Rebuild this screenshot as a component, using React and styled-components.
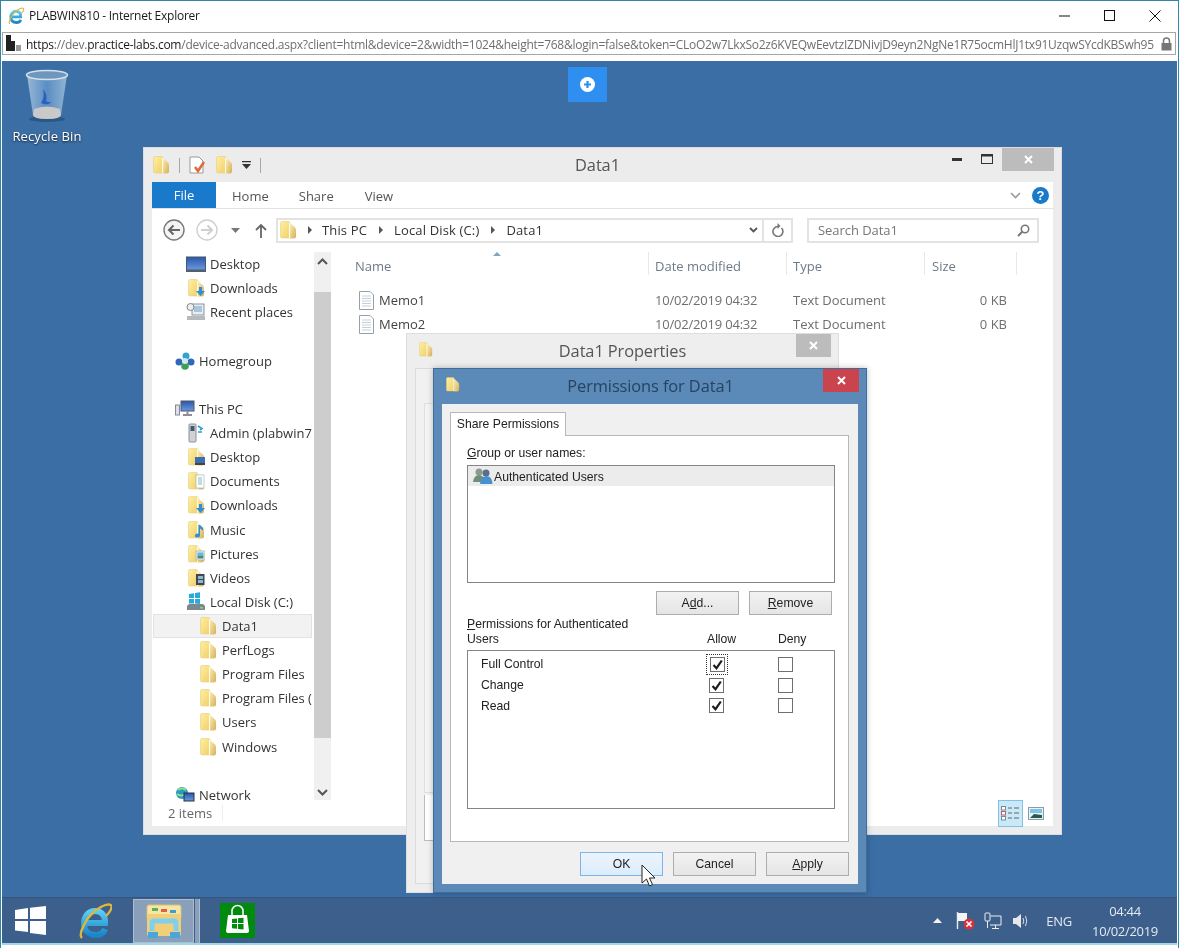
import React from "react";
import styled, { createGlobalStyle } from "styled-components";

const Global = createGlobalStyle`
  html, body { margin: 0; padding: 0; background: #fff; overflow: hidden; }
  * { box-sizing: border-box; }
`;

const ui = `"Open Sans", "Noto Sans", sans-serif`;
const dlg = `"Liberation Sans", Arial, sans-serif`;

const Frame = styled.div`
  width: 1179px; height: 948px; display: flex; flex-direction: column;
  background: #fff; border-top: 1px solid #2f86a6; border-left: 1px solid #2f86a6;
  border-right: 1px solid #2f86a6; padding: 0 1px 3px; font-family: ${ui};
  filter: blur(0.4px); overflow: hidden;
`;
const BrowserTitle = styled.div`
  height: 31px; flex: none; display: flex; align-items: center; padding: 0 0 2px 6px;
  font-size: 12px; color: #1a1a1a; letter-spacing: -0.25px;
`;
const BrowserTitleText = styled.span`flex: 1; padding-left: 5px;`;
const WindowControl = styled.div`
  width: 45px; height: 29px; display: flex; align-items: center; justify-content: center;
`;
const UrlBar = styled.div`
  height: 23px; flex: none; margin-right: 1px; border: 1px solid #a6a6a6; display: flex; align-items: center;
  padding: 0 3px 0 3px; gap: 4px; overflow: hidden;
`;
const UrlText = styled.div`
  flex: 1; white-space: nowrap; overflow: hidden; font-size: 12px; color: #6f6f6f; letter-spacing: -0.25px; padding-top: 1px;
`;
const UrlStrong = styled.span`color: #1a1a1a;`;
const Desktop = styled.div`
  margin-top: 6px; height: 836px; flex: none; position: relative; background: #3b6ea5;
`;
const RevealButton = styled.div`
  position: absolute; left: 566px; top: 6px; width: 39px; height: 35px; background: #2e8ff0;
  display: flex; align-items: center; justify-content: center;
`;
const DesktopIcon = styled.div`
  position: absolute; left: 4px; top: 8px; width: 82px; display: flex; flex-direction: column; align-items: center; gap: 4px;
  color: #fff; font-size: 13px; text-shadow: 0 1px 2px rgba(0,0,0,.75); letter-spacing: 0.1px;
`;
const Explorer = styled.div`
  position: absolute; left: 141px; top: 86px; width: 919px; height: 688px; background: #ececec;
  border: 1px solid #dcdcdc; display: flex; flex-direction: column; padding: 0 8px 8px;
`;
const ExplorerTitleBar = styled.div`
  height: 34px; flex: none; display: grid; grid-template-columns: 1fr auto 1fr; align-items: center;
`;
const Quick = styled.div`display: flex; align-items: center; gap: 9px; padding-left: 1px;`;
const QuickSep = styled.div`width: 1px; height: 15px; background: #a8a8a8;`;
const WindowTitle = styled.div`
  text-align: center; font-size: 16.4px; color: ${p => p.$color || "#555"}; letter-spacing: -0.1px;
`;
const ExplorerCaption = styled(WindowTitle)`padding: 0 10px 2px 0;`;
const ExplorerCaps = styled.div`
  display: flex; justify-content: flex-end; align-items: flex-start; height: 34px; margin-right: -1px;
`;
const CapIcon = styled.div`
  width: 30px; height: 22px; display: flex; align-items: center; justify-content: center;
`;
const CloseCap = styled.div`
  width: ${p => p.$w || 52}px; height: 23px; background: ${p => p.$bg || "#bcbcbc"}; justify-self: end;
  display: flex; align-items: center; justify-content: center; flex: none;
`;
const Client = styled.div`flex: 1; background: #fff; display: flex; flex-direction: column; min-height: 0;`;
const Ribbon = styled.div`
  height: 27px; flex: none; border-bottom: 1px solid #e2e2e2; display: flex; align-items: stretch;
  font-size: 13px; color: #555;
`;
const FileTab = styled.div`
  width: 64px; height: 26px; background: #1979ca; color: #fff; display: flex; align-items: center; justify-content: center;
`;
const RibbonTab = styled.div`display: flex; align-items: center; padding-top: 2px; margin-left: ${p => p.$ml}px;`;
const RibbonEnd = styled.div`margin-left: auto; display: flex; align-items: center; gap: 11px; padding-right: 4px;`;
const HelpDot = styled.div`
  width: 17px; height: 17px; border-radius: 50%; background: #1979ca; color: #fff; font: bold 13px ${dlg};
  display: flex; align-items: center; justify-content: center;
`;
const AddressRow = styled.div`
  height: 44px; flex: none; display: flex; align-items: center; padding: 0 13px 0 11px; margin-top: -1px;
`;
const NavButtons = styled.div`display: flex; align-items: center; width: 113px; flex: none;`;
const AddressBox = styled.div`
  width: 517px; height: 25px; border: 2px solid #e3e3e3; display: flex; align-items: center; font-size: 13px; color: #333;
  padding-left: 2px; flex: none;
`;
const Crumb = styled.span`margin-left: ${p => p.$ml || 0}px; white-space: nowrap; letter-spacing: 0.15px;`;
const CrumbArrow = styled.span`
  margin-left: ${p => p.$ml || 9}px; width: 0; height: 0; border-left: 4px solid #555; border-top: 4px solid transparent; border-bottom: 4px solid transparent;
`;
const AddressEnd = styled.div`
  margin-left: auto; display: flex; align-items: center; height: 100%;
`;
const AddressCell = styled.div`
  width: ${p => p.$w}px; height: 100%; display: flex; align-items: center; justify-content: center;
  border-left: ${p => p.$line ? "2px solid #e3e3e3" : "none"};
`;
const SearchBox = styled.div`
  margin-left: 14px; width: 232px; height: 25px; border: 2px solid #e3e3e3; display: flex; align-items: center; justify-content: space-between;
  padding: 0 7px 0 9px; font-size: 13px; color: #777; flex: none; letter-spacing: -0.05px;
`;
const Body = styled.div`flex: 1; display: flex; min-height: 0;`;
const NavPane = styled.div`
  width: 161px; flex: none; font-size: 13px; color: #333; padding-left: 1px;
`;
const NavRow = styled.div`
  height: 24.12px; display: flex; align-items: center; white-space: nowrap; width: 159px; overflow: hidden;
  padding-left: ${p => p.$level === 0 ? 22 : p.$level === 1 ? 33 : 45}px; gap: 4px;
  margin-top: ${p => p.$gap || 0}px;
  background: ${p => p.$sel ? "#f2f2f2" : "none"};
  outline: ${p => p.$sel ? "1px solid #e2e2e2" : "none"}; outline-offset: -1px;
`;
const IconSlot = styled.span`
  width: ${p => p.$w || 20}px; height: 20px; flex: none; display: flex; align-items: center; justify-content: center; margin-right: ${p => p.$mr || 0}px;
`;
const ScrollTrack = styled.div`
  width: 17px; flex: none; background: #f0f0f0; display: flex; flex-direction: column; margin-left: 1px;
`;
const ScrollEnd = styled.div`
  height: ${p => p.$h}px; flex: none; display: flex; justify-content: center; align-items: ${p => p.$down ? "flex-end" : "flex-start"};
  padding: ${p => p.$down ? "0 0 4px" : "6px 0 0"};
`;
const ScrollThumb = styled.div`flex: 1; background: #cdcdcd;`;
const ListPane = styled.div`flex: 1; display: flex; flex-direction: column; padding-left: 24px;`;
const HeaderRow = styled.div`
  display: grid; grid-template-columns: 294px 138px 138px 92px; height: 23px; font-size: 13px; color: #6d7a88; position: relative;
`;
const HeaderCell = styled.div`
  border-right: 1px solid #e8e8e8; padding-left: ${p => p.$pl ?? 6}px; display: flex; align-items: center; padding-top: 4px;
`;
const SortMark = styled.div`
  position: absolute; left: 138px; top: 0; width: 0; height: 0; border-left: 4px solid transparent; border-right: 4px solid transparent; border-bottom: 4px solid #7ca6c4;
`;
const FileList = styled.div`margin-top: 13px;`;
const FileRow = styled.div`
  display: grid; grid-template-columns: 294px 138px 138px 82px; height: 24px; align-items: center; font-size: 13px; color: #6e6e6e;
`;
const FileName = styled.div`display: flex; align-items: center; gap: 4px; padding-left: 3px; color: #444;`;
const FileCell = styled.div`padding-left: 6px; white-space: nowrap; text-align: ${p => p.$right ? "right" : "left"}; letter-spacing: ${p => p.$tight ? "-0.2px" : "0"};`;
const StatusBar = styled.div`
  height: 26px; flex: none; display: flex; align-items: center; padding-left: 16px; font-size: 13px; color: #666; position: relative;
`;
const StatusSep = styled.div`width: 1px; height: 16px; background: #eee; margin-left: 10px;`;
const ViewToggles = styled.div`margin-left: auto; display: flex; align-items: flex-start; height: 26px; gap: 5px; padding-right: 9px;`;
const ViewToggle = styled.div`
  width: ${p => p.$on ? 25 : 16}px; height: ${p => p.$on ? 27 : 26}px; display: flex; align-items: center; justify-content: center;
  background: ${p => p.$on ? "#cbe8f6" : "none"}; border: ${p => p.$on ? "1px solid #7fc4e8" : "none"};
`;
const Properties = styled.div`
  position: absolute; left: 404px; top: 272px; width: 433px; height: 560px; background: #eee; border: 1px solid #dedede;
  display: flex; flex-direction: column; padding: 0 0 8px 8px;
`;
const PropsTitle = styled.div`
  height: 34px; flex: none; display: grid; grid-template-columns: 36px 1fr 44px; align-items: start; padding-right: 7px; margin-left: -8px;
`;
const PropsCaption = styled(WindowTitle)`padding: 5px 0 0 15px;`;
const PropsIcon = styled.div`padding: 7px 0 0 12px;`;
const PropsTab = styled.div`
  flex: 1; border: 1px solid #dcdcdc; border-right: 0; padding: 34px 0 0 8px; display: flex; flex-direction: column; background: #f1f1f1; min-height: 0;
`;
const PropsUpper = styled.div`height: 390px; border: 1px solid #dfdfdf; border-right: 0; flex: none; background: #f4f4f4;`;
const PropsWhite = styled.div`height: 46px; background: #fff; border-left: 1px solid #bbb; border-bottom: 1px solid #bbb; flex: none; margin-top: 2px;`;
const Permissions = styled.div`
  position: absolute; left: 431px; top: 307px; width: 434px; height: 525px; background: #5b89b8; border: 1px solid #3f6c9b;
  display: flex; flex-direction: column; padding: 0 8px 8px; box-shadow: 0 0 6px rgba(0,0,0,.25);
`;
const PermTitle = styled.div`
  height: 35px; flex: none; display: grid; grid-template-columns: 36px 1fr 36px; align-items: start; margin-right: -1px;
`;
const PermCaption = styled(WindowTitle)`padding: 5px 0 0 0;`;
const PermIcon = styled.div`padding: 7px 0 0 4px;`;
const DialogClient = styled.div`
  flex: 1; background: #f0f0f0; padding: 8px 9px 0 8px; display: flex; flex-direction: column; font-family: ${dlg}; font-size: 12.2px; color: #222;
`;
const TabHead = styled.div`
  width: 116px; height: 24px; background: #fff; border: 1px solid #b8b8b8; border-bottom: 0; display: flex; align-items: center; justify-content: center;
  margin-bottom: -1px; position: relative; z-index: 1; padding-bottom: 1px;
`;
const TabPanel = styled.div`
  height: 407px; background: #fff; border: 1px solid #b8b8b8; padding: 10px 13px 0 16px; display: flex; flex-direction: column; flex: none;
`;
const FieldLabel = styled.div`line-height: 15px; height: 15px;`;
const UserList = styled.div`
  height: 118px; margin-top: 4px; border: 1px solid #858585; padding: 0; flex: none;
`;
const UserRow = styled.div`
  height: 20px; background: #ececec; display: flex; align-items: center; padding-left: 5px; gap: 1px;
`;
const UserName = styled.span`padding-top: 1px;`;
const ListActions = styled.div`display: flex; justify-content: flex-end; gap: 10px; margin-top: 8px; padding-right: 3px;`;
const DButton = styled.div`
  width: 83px; height: 24px; flex: none; display: flex; align-items: center; justify-content: center;
  border: 1px solid ${p => p.$active ? "#7eb4ea" : "#adadad"};
  background: ${p => p.$active ? "linear-gradient(#ecf4fc,#dcecfc)" : "linear-gradient(#f2f2f2,#e5e5e5)"};
`;
const PermHeader = styled.div`
  display: grid; grid-template-columns: 240px 71px 60px; margin-top: 2px; line-height: 15px; align-items: end;
`;
const PermGrid = styled.div`
  height: 159px; border: 1px solid #858585; margin-top: 3px; flex: none; padding-top: 3px;
`;
const PermRow = styled.div`
  height: 20.7px; display: grid; grid-template-columns: 228px 69px 30px; align-items: center; padding-left: 13px;
`;
const CheckCell = styled.div`
  width: ${p => p.$focus ? 20 : 15}px; height: ${p => p.$focus ? 19 : 15}px; display: flex; align-items: center; justify-content: center;
  outline: ${p => p.$focus ? "1px dotted #333" : "none"}; margin-left: ${p => p.$focus ? -2 : 0}px; 
`;
const CheckBox = styled.div`
  width: 15px; height: 15px; border: 1px solid #6f6f6f; background: #fff; display: flex; align-items: center; justify-content: center;
`;
const DialogActions = styled.div`display: flex; justify-content: flex-end; gap: 10px; padding: 10px 0 0 0;`;
const Cursor = styled.svg`position: absolute; left: 639px; top: 803px;`;
const Taskbar = styled.div`
  flex: none; background: #3c5f8b; border-top: 1px solid #355580; border-bottom: 2px solid #9fd7e6;
  display: flex; align-items: center; height: 48px; position: relative; font-family: ${ui}; color: #e4eaf2;
`;
const StartSlot = styled.div`width: 57px; flex: none; display: flex; justify-content: center;`;
const TaskSlot = styled.div`width: ${p => p.$w}px; flex: none; display: flex; justify-content: center; margin-left: ${p => p.$ml || 0}px;`;
const ActiveTask = styled.div`
  width: 61px; height: 44px; flex: none; margin-left: 16px; background: #8aa0ba; border: 1px solid #aebcd0;
  display: flex; align-items: center; justify-content: center; 
`;
const ActiveSliver = styled.div`width: 5px; height: 44px; flex: none; background: #8aa0ba; border-right: 1px solid #aebcd0; margin-left: 1px;`;
const Tray = styled.div`margin-left: auto; display: flex; align-items: center; padding-right: 19px;`;
const TrayIcon = styled.div`display: flex; margin-left: ${p => p.$ml}px;`;
const Lang = styled.div`font-size: 13px; margin-left: 17px; letter-spacing: -0.2px;`;
const Clock = styled.div`font-size: 13px; text-align: center; margin-left: 20px; line-height: 20px; letter-spacing: -0.3px;`;
const Key = styled.u``;
const DefsHolder = styled.svg`position: absolute; width: 0; height: 0;`;

const Defs = () => (
  <DefsHolder aria-hidden="true">
    <defs>
      <linearGradient id="fa" x1="0" y1="0" x2="1" y2="1"><stop offset="0" stopColor="#fff0a0" /><stop offset="1" stopColor="#f0cf6a" /></linearGradient>
      <linearGradient id="fb" x1="0" y1="0" x2="1" y2="1"><stop offset="0" stopColor="#fbeeb6" /><stop offset="1" stopColor="#d7ae56" /></linearGradient>
      <linearGradient id="ie" x1="0" y1="0" x2="0" y2="1"><stop offset="0" stopColor="#5bcdf5" /><stop offset="1" stopColor="#1a86c8" /></linearGradient>
      <linearGradient id="bin" x1="0" y1="0" x2="1" y2="0"><stop offset="0" stopColor="#a8c4de" /><stop offset=".5" stopColor="#5f93c8" /><stop offset="1" stopColor="#a2c0dc" /></linearGradient>
      <linearGradient id="scr" x1="0" y1="0" x2="0" y2="1"><stop offset="0" stopColor="#2a56a8" /><stop offset="1" stopColor="#6a9ae0" /></linearGradient>
    </defs>
  </DefsHolder>
);

const Folder = ({ w = 17, h = 18, badge }) => (
  <svg width={w} height={h} viewBox="0 0 17 18">
    <path d="M0.500 2Q0.500 .5 2 .5H9L10 2V17H2Q.5 17 .5 15.500Z" fill="url(#fa)" stroke="#e3c878" strokeWidth=".5" />
    <path d="M10 2L15 6.500Q16 7.500 16 9V15.500Q16 17.500 14 17.500H10Z" fill="url(#fb)" />
    <path d="M9.500 2V17" stroke="#fffbe0" strokeWidth="1.100" />
    {badge === "down" && <path d="M11 8h3v4h3l-4.500 5L8 12h3z" fill="#2f8ed8" />}
    {badge === "desk" && <g><rect x="7" y="9" width="10" height="6" fill="#3a6fb5" /><rect x="7" y="15" width="10" height="2" fill="#444" /></g>}
    {badge === "doc" && <g><rect x="8" y="3" width="8" height="13" fill="#fff" stroke="#9aa" strokeWidth=".6" /><path d="M10 6h4M10 8h4M10 10h4M10 12h4" stroke="#6aa" strokeWidth=".8" /></g>}
    {badge === "music" && <path d="M12 4v10.500a2.500 2 0 1 1-1.500-1.800V4zM12 4l3 3v2.500l-3-2z" fill="#2f8ed8" />}
    {badge === "pic" && <g><rect x="8" y="6" width="9" height="9" fill="#dfeaf2" stroke="#9aa" strokeWidth=".6" /><rect x="9.500" y="7.500" width="6" height="3" fill="#6bb6d8" /><rect x="9.500" y="10.500" width="6" height="3" fill="#587" /></g>}
    {badge === "vid" && <g><rect x="8" y="5" width="8.500" height="11" fill="#445" /><rect x="10" y="7" width="5" height="3" fill="#8bc" /><rect x="10" y="11" width="5" height="3" fill="#8bc" /></g>}
  </svg>
);

const DocIcon = () => (
  <svg width="17" height="19" viewBox="0 0 17 19">
    <path d="M1.500.5H12L15.500 4V18.500H1.500Z" fill="#fff" stroke="#9a9fa6" />
    <path d="M4 5h9M4 7.500h9M4 10h9M4 12.500h9M4 15h9" stroke="#c4cfdb" />
  </svg>
);

const Ico = {
  desktop: () => <svg width="20" height="17" viewBox="0 0 20 17"><rect x="0.500" y="1" width="19" height="13" fill="url(#scr)" stroke="#45566e" /><rect x="0" y="14" width="20" height="2" fill="#555e6c" /></svg>,
  recent: () => <svg width="20" height="20" viewBox="0 0 20 20"><rect x="6" y="2" width="12" height="11" fill="#e8edf2" stroke="#8a939e" /><rect x="8" y="4" width="8" height="6" fill="#aac6de" /><circle cx="4.500" cy="5" r="3.500" fill="#eee" stroke="#888" /><rect x="1" y="14" width="18" height="4" fill="#b5bac0" /></svg>,
  home: () => <svg width="20" height="18" viewBox="0 0 20 18"><circle cx="4" cy="10" r="3.500" fill="#2f68b8" /><circle cx="16" cy="10" r="3.500" fill="#2f68b8" /><circle cx="11" cy="4" r="3.500" fill="#36a0d0" /><circle cx="10" cy="14" r="3.800" fill="#3c9e58" /><circle cx="10" cy="9" r="3" fill="#cfe8f4" /></svg>,
  pc: () => <svg width="20" height="17" viewBox="0 0 20 17"><rect x="0.500" y="5" width="4" height="10" fill="#dde" stroke="#889" /><rect x="6" y="1" width="13" height="10" fill="url(#scr)" stroke="#556" /><path d="M12.500 11v3M8 15h9" stroke="#8a8f98" strokeWidth="2" /></svg>,
  admin: () => <svg width="18" height="20" viewBox="0 0 18 20"><rect x="2" y="1" width="7" height="18" rx="1" fill="#cfd3d8" stroke="#8a9098" /><rect x="3.500" y="3" width="4" height="5" fill="#46586c" /><path d="M11 3l4 2.500-2 1.500M11 9h4" stroke="#2a9ad0" strokeWidth="1.600" fill="none" /></svg>,
  disk: () => <svg width="20" height="20" viewBox="0 0 20 20"><path d="M3 2l5-.8V6H3zM9 1l5-.8V6H9zM3 7h5v4.500H3zM9 7h5v5l-5-.5z" fill="#29a9d8" /><path d="M1 14l2-2h14l2 2v4H1z" fill="#7c8794" /><rect x="14" y="15" width="3" height="1.500" fill="#7fdc6c" /></svg>,
  net: () => <svg width="20" height="18" viewBox="0 0 20 18"><circle cx="7" cy="7" r="6" fill="#2c9ac0" /><path d="M3 4q4-3 8 0M2 8q4 3 9 0" stroke="#8fe08a" fill="none" strokeWidth="2" /><rect x="9" y="7" width="10" height="8" fill="url(#scr)" stroke="#234" /></svg>,
};

const navRows = [
  { t: "Desktop", l: 1, i: <Ico.desktop /> },
  { t: "Downloads", l: 1, i: <Folder badge="down" /> },
  { t: "Recent places", l: 1, i: <Ico.recent /> },
  { t: "Homegroup", l: 0, i: <Ico.home />, g: 24.5 },
  { t: "This PC", l: 0, i: <Ico.pc />, g: 24 },
  { t: "Admin (plabwin7", l: 1, i: <Ico.admin /> },
  { t: "Desktop", l: 1, i: <Folder badge="desk" /> },
  { t: "Documents", l: 1, i: <Folder badge="doc" /> },
  { t: "Downloads", l: 1, i: <Folder badge="down" /> },
  { t: "Music", l: 1, i: <Folder badge="music" /> },
  { t: "Pictures", l: 1, i: <Folder badge="pic" /> },
  { t: "Videos", l: 1, i: <Folder badge="vid" /> },
  { t: "Local Disk (C:)", l: 1, i: <Ico.disk /> },
  { t: "Data1", l: 2, i: <Folder />, sel: true },
  { t: "PerfLogs", l: 2, i: <Folder /> },
  { t: "Program Files", l: 2, i: <Folder /> },
  { t: "Program Files (", l: 2, i: <Folder /> },
  { t: "Users", l: 2, i: <Folder /> },
  { t: "Windows", l: 2, i: <Folder /> },
  { t: "Network", l: 0, i: <Ico.net />, g: 24 },
];

const IE = ({ s = 34 }) => (
  <svg width={s} height={s * 38 / 34} viewBox="0 0 34 38">
    <path d="M9 21H27C27.500 13 23 9 17 9C10 9 6 15 6 22C6 29 11 33 18 33C22 33 25.500 31.500 27 27" fill="none" stroke="url(#ie)" strokeWidth="6" />
    <path d="M4 36C0 33 7 17 17 9C25 2.500 33 .5 33.500 4.500C33.800 7.500 31 11 28 14" fill="none" stroke="#e0b63c" strokeWidth="2.400" />
  </svg>
);

const XMark = ({ c = "#fff", s = 9, w = 2 }) => (
  <svg width={s} height={s} viewBox="0 0 9 9"><path d="M1 1l7 7M8 1l-7 7" stroke={c} strokeWidth={w} /></svg>
);

const Check = () => (
  <svg width="11" height="11" viewBox="0 0 11 11"><path d="M1.500 6l3 3.200L9.800 1.500" fill="none" stroke="#1c1c1c" strokeWidth="2.200" /></svg>
);

const Perm = ({ name, focus }) => (
  <PermRow>
    <span>{name}</span>
    <CheckCell $focus={focus}><CheckBox><Check /></CheckBox></CheckCell>
    <CheckBox />
  </PermRow>
);

export default function App() {
  return (
    <>
      <Global />
      <Defs />
      <Frame>
        <BrowserTitle>
          <IE s={16} />
          <BrowserTitleText>PLABWIN810 - Internet Explorer</BrowserTitleText>
          <WindowControl><svg width="12" height="2"><rect width="11" height="1" y="0.500" fill="#111" /></svg></WindowControl>
          <WindowControl><svg width="11" height="11"><rect x=".5" y=".5" width="10" height="10" fill="none" stroke="#111" /></svg></WindowControl>
          <WindowControl><svg width="12" height="12" viewBox="0 0 12 12"><path d="M.5.5l11 11M11.500.5l-11 11" stroke="#111" /></svg></WindowControl>
        </BrowserTitle>
        <UrlBar>
          <svg width="16" height="17" viewBox="0 0 16 17"><rect x="0" y="0" width="5" height="16" fill="#222" /><rect x="5" y="6" width="4" height="10" fill="#222" /><rect x="10" y="10" width="5" height="6" fill="#999" /></svg>
          <UrlText><UrlStrong>https</UrlStrong>://dev.<UrlStrong>practice-labs.com</UrlStrong>/device-advanced.aspx?client=html&amp;device=2&amp;width=1024&amp;height=768&amp;login=false&amp;token=CLoO2w7LkxSo2z6KVEQwEevtzIZDNivjD9eyn2NgNe1R75ocmHlJ1tx91UzqwSYcdKBSwh95</UrlText>
          <svg width="11" height="14" viewBox="0 0 11 14"><path d="M2.500 6V4a3 3 0 0 1 6 0v2" fill="none" stroke="#777" strokeWidth="1.500" /><rect x="0.500" y="6" width="10" height="7.500" fill="#777" /></svg>
        </UrlBar>
        <Desktop>
          <RevealButton>
            <svg width="15" height="15" viewBox="0 0 15 15"><circle cx="7.500" cy="7.500" r="7.500" fill="#fff" /><path d="M7.500 4v7M4 7.500h7" stroke="#2e8ff0" strokeWidth="2.200" /></svg>
          </RevealButton>
          <DesktopIcon>
            <svg width="44" height="54" viewBox="0 0 44 54">
              <ellipse cx="22" cy="50" rx="18" ry="3" fill="#1d3f66" opacity=".5" />
              <path d="M2 6L8 46Q9 50 22 50Q35 50 36 46L42 6Z" fill="url(#bin)" opacity=".85" />
              <path d="M9 40Q22 35 35 40L36 46Q35 50 22 50Q9 50 8 46Z" fill="#c9c9c9" />
              <path d="M18 20q5 6 3 12q3 2 6 1q-5 4-11 1q4-6 2-14z" fill="#2b5fc0" />
              <ellipse cx="22" cy="6" rx="20.500" ry="4.500" fill="#6f97be" stroke="#d4e0ea" strokeWidth="1.500" />
            </svg>
            <span>Recycle Bin</span>
          </DesktopIcon>

          <Explorer>
            <ExplorerTitleBar>
              <Quick>
                <Folder />
                <QuickSep />
                <svg width="18" height="18" viewBox="0 0 18 18"><path d="M1 1h9l4 4v12H1z" fill="#fff" stroke="#999" /><path d="M6 11l3 4 6-9" stroke="#e0693c" strokeWidth="2.500" fill="none" /></svg>
                <Folder />
                <svg width="9" height="8" viewBox="0 0 9 8"><path d="M0 0h9v1.200H0zM0 3h9L4.500 8z" fill="#333" /></svg>
                <QuickSep />
              </Quick>
              <ExplorerCaption>Data1</ExplorerCaption>
              <ExplorerCaps>
                <CapIcon><svg width="10" height="3"><rect width="10" height="3" fill="#333" /></svg></CapIcon>
                <CapIcon><svg width="12" height="10"><rect x=".5" y=".5" width="11" height="9" fill="none" stroke="#333" /><rect width="12" height="2.500" fill="#333" /></svg></CapIcon>
                <CloseCap><XMark /></CloseCap>
              </ExplorerCaps>
            </ExplorerTitleBar>
            <Client>
              <Ribbon>
                <FileTab>File</FileTab>
                <RibbonTab $ml={16}>Home</RibbonTab>
                <RibbonTab $ml={30}>Share</RibbonTab>
                <RibbonTab $ml={31}>View</RibbonTab>
                <RibbonEnd>
                  <svg width="11" height="7" viewBox="0 0 11 7"><path d="M1 1l4.500 4.500L10 1" fill="none" stroke="#999" strokeWidth="1.600" /></svg>
                  <HelpDot>?</HelpDot>
                </RibbonEnd>
              </Ribbon>
              <AddressRow>
                <NavButtons>
                  <svg width="22" height="22" viewBox="0 0 22 22"><circle cx="11" cy="11" r="10" fill="#f4f4f4" stroke="#777" strokeWidth="1.400" /><path d="M17 11H6M10.500 6.500L6 11l4.500 4.500" fill="none" stroke="#666" strokeWidth="2" /></svg>
                  <svg width="22" height="22" viewBox="0 0 22 22" style={{ marginLeft: 11 }}><circle cx="11" cy="11" r="10" fill="#fff" stroke="#cfcfcf" strokeWidth="1.400" /><path d="M5 11h11M11.500 6.500L16 11l-4.500 4.500" fill="none" stroke="#cfcfcf" strokeWidth="2" /></svg>
                  <svg width="9" height="5" viewBox="0 0 9 5" style={{ marginLeft: 13 }}><path d="M0 0h9L4.500 5z" fill="#777" /></svg>
                  <svg width="12" height="15" viewBox="0 0 12 15" style={{ marginLeft: 15 }}><path d="M6 15V2M1 7l5-5 5 5" fill="none" stroke="#666" strokeWidth="1.800" /></svg>
                </NavButtons>
                <AddressBox>
                  <Folder />
                  <CrumbArrow $ml={11} />
                  <Crumb $ml={10}>This PC</Crumb>
                  <CrumbArrow $ml={12} />
                  <Crumb $ml={11}>Local Disk (C:)</Crumb>
                  <CrumbArrow $ml={12} />
                  <Crumb $ml={11}>Data1</Crumb>
                  <AddressEnd>
                    <AddressCell $w={18}><svg width="9" height="6" viewBox="0 0 9 6"><path d="M1 1l3.500 3.500L8 1" fill="none" stroke="#555" strokeWidth="1.800" /></svg></AddressCell>
                    <AddressCell $w={29} $line><svg width="12" height="14" viewBox="0 0 12 14"><path d="M9.500 5a5 5 0 1 1-3.500-1.500" fill="none" stroke="#777" strokeWidth="1.600" /><path d="M5.500 0v6l3-3z" fill="#777" /></svg></AddressCell>
                  </AddressEnd>
                </AddressBox>
                <SearchBox>
                  <span>Search Data1</span>
                  <svg width="13" height="13" viewBox="0 0 13 13"><circle cx="8" cy="5" r="3.700" fill="none" stroke="#777" strokeWidth="1.600" /><path d="M5.500 7.500L1 12" stroke="#777" strokeWidth="2" /></svg>
                </SearchBox>
              </AddressRow>
              <Body>
                <NavPane>
                  {navRows.map((r, i) => (
                    <NavRow key={i} $level={r.l} $gap={r.g} $sel={r.sel}>
                      <IconSlot>{r.i}</IconSlot>
                      <span>{r.t}</span>
                    </NavRow>
                  ))}
                </NavPane>
                <ScrollTrack>
                  <ScrollEnd $h={40}><svg width="11" height="7" viewBox="0 0 11 7"><path d="M1 6l4.500-4.500L10 6" fill="none" stroke="#555" strokeWidth="2" /></svg></ScrollEnd>
                  <ScrollThumb />
                  <ScrollEnd $h={62} $down><svg width="11" height="7" viewBox="0 0 11 7"><path d="M1 1l4.500 4.500L10 1" fill="none" stroke="#555" strokeWidth="2" /></svg></ScrollEnd>
                </ScrollTrack>
                <ListPane>
                  <HeaderRow>
                    <SortMark />
                    <HeaderCell $pl={0}>Name</HeaderCell>
                    <HeaderCell>Date modified</HeaderCell>
                    <HeaderCell>Type</HeaderCell>
                    <HeaderCell $pl={7}>Size</HeaderCell>
                  </HeaderRow>
                  <FileList>
                    {["Memo1", "Memo2"].map(n => (
                      <FileRow key={n}>
                        <FileName><DocIcon /><span>{n}</span></FileName>
                        <FileCell $tight>10/02/2019 04:32</FileCell>
                        <FileCell>Text Document</FileCell>
                        <FileCell $right>0 KB</FileCell>
                      </FileRow>
                    ))}
                  </FileList>
                </ListPane>
              </Body>
              <StatusBar>
                <span>2 items</span>
                <StatusSep />
                <ViewToggles>
                  <ViewToggle $on>
                    <svg width="19" height="15" viewBox="0 0 19 15"><rect x=".5" y=".5" width="4" height="3.500" fill="#fff" stroke="#7a8a98" /><rect x=".5" y="5.500" width="4" height="3.500" fill="#fff" stroke="#c05a70" /><rect x=".5" y="10.500" width="4" height="3.500" fill="#fff" stroke="#7a8a98" /><path d="M7 2h4M13 2h5M7 7h4M13 7h5M7 12h4M13 12h5" stroke="#5a6470" /></svg>
                  </ViewToggle>
                  <ViewToggle>
                    <svg width="16" height="13" viewBox="0 0 16 13"><rect x=".5" y=".5" width="15" height="12" fill="#e8f2fa" stroke="#8a9aa8" /><rect x="2" y="2" width="12" height="4" fill="#7ec4e4" /><path d="M2 11l4-4 8 1v3z" fill="#2a5a4a" /></svg>
                  </ViewToggle>
                </ViewToggles>
              </StatusBar>
            </Client>
          </Explorer>

          <Properties>
            <PropsTitle>
              <PropsIcon><Folder w={14} h={17} /></PropsIcon>
              <PropsCaption $color="#555">Data1 Properties</PropsCaption>
              <CloseCap $w={35}><XMark /></CloseCap>
            </PropsTitle>
            <PropsTab>
              <PropsUpper />
              <PropsWhite />
            </PropsTab>
          </Properties>

          <Permissions>
            <PermTitle>
              <PermIcon><Folder w={14} h={17} /></PermIcon>
              <PermCaption $color="#264461">Permissions for Data1</PermCaption>
              <CloseCap $w={36} $bg="#c9444c"><XMark /></CloseCap>
            </PermTitle>
            <DialogClient>
              <TabHead>Share Permissions</TabHead>
              <TabPanel>
                <FieldLabel><Key>G</Key>roup or user names:</FieldLabel>
                <UserList>
                  <UserRow>
                    <svg width="20" height="18" viewBox="0 0 20 18"><circle cx="6" cy="5" r="3.500" fill="#8a9a8e" /><path d="M0 15q1-7 6-7t6 7z" fill="#6f8f78" /><circle cx="13" cy="6" r="3.500" fill="#5a6e88" /><path d="M7 17q1-8 6.500-8t6 8z" fill="#4a90d0" /></svg>
                    <UserName>Authenticated Users</UserName>
                  </UserRow>
                </UserList>
                <ListActions>
                  <DButton><span>A<Key>d</Key>d...</span></DButton>
                  <DButton><span><Key>R</Key>emove</span></DButton>
                </ListActions>
                <PermHeader>
                  <span><Key>P</Key>ermissions for Authenticated<br />Users</span>
                  <span>Allow</span>
                  <span>Deny</span>
                </PermHeader>
                <PermGrid>
                  <Perm name="Full Control" focus />
                  <Perm name="Change" />
                  <Perm name="Read" />
                </PermGrid>
              </TabPanel>
              <DialogActions>
                <DButton $active>OK</DButton>
                <DButton>Cancel</DButton>
                <DButton><span><Key>A</Key>pply</span></DButton>
              </DialogActions>
            </DialogClient>
          </Permissions>
          <Cursor width="16" height="24" viewBox="0 0 16 24">
            <path d="M1 1V19L5.500 15L8.500 22L11.500 20.500L8.500 14H14Z" fill="#fff" stroke="#222" strokeWidth="1" />
          </Cursor>
        </Desktop>
        <Taskbar>
          <StartSlot>
            <svg width="31" height="29" viewBox="0 0 31 29"><path d="M0 4L13 2V13H0zM15 1.800L31 0V13H15zM0 15H13V26L0 24.500zM15 15H31V29L15 27z" fill="#fff" /></svg>
          </StartSlot>
          <TaskSlot $w={44} $ml={14}><IE s={34} /></TaskSlot>
          <ActiveTask>
            <svg width="36" height="36" viewBox="0 0 36 36">
              <rect x="1" y="2" width="34" height="14" rx="2" fill="#f7e5a5" stroke="#d9c070" />
              <rect x="6" y="5" width="6" height="3" fill="#58b058" /><rect x="15" y="6" width="6" height="3" fill="#d8604c" /><rect x="24" y="7" width="6" height="3" fill="#3f9ad8" />
              <rect x="1" y="11" width="34" height="22" rx="2" fill="#f0cf78" />
              <path d="M6 28v-8q0-2 2-2h20q2 0 2 2v8" fill="none" stroke="#7fd0ee" strokeWidth="5" />
              <rect x="2" y="29" width="10" height="6" fill="#4aa6d8" /><rect x="24" y="29" width="10" height="6" fill="#4aa6d8" />
            </svg>
          </ActiveTask>
          <ActiveSliver />
          <TaskSlot $w={35} $ml={20}>
            <svg width="35" height="35" viewBox="0 0 35 35"><rect width="35" height="35" fill="#008a0e" /><path d="M8 12H27L29 28Q29 30 27 30H8Q6 30 6 28Z" fill="#fff" /><path d="M12 12V8a5.500 5.500 0 0 1 11 0v4" fill="none" stroke="#fff" strokeWidth="1.500" /><path d="M12 16l5-.6V20h-5zM18 15.300l5.500-.6V20H18zM12 21h5v4.800l-5-.6zM18 21h5.500v5.500l-5.500-.6z" fill="#008a0e" /></svg>
          </TaskSlot>
          <Tray>
            <svg width="9" height="5" viewBox="0 0 9 5"><path d="M0 5h9L4.500 0z" fill="#f2f2f2" /></svg>
            <TrayIcon $ml={14}>
              <svg width="19" height="18" viewBox="0 0 19 18"><path d="M1.500 0v17" stroke="#eee" strokeWidth="1.400" /><path d="M2 1h9v8H2z" fill="#f4f4f4" /><circle cx="13" cy="12" r="5.500" fill="#d6333a" /><path d="M10.500 9.500l5 5M15.500 9.500l-5 5" stroke="#fff" strokeWidth="1.600" /></svg>
            </TrayIcon>
            <TrayIcon $ml={9}>
              <svg width="18" height="18" viewBox="0 0 18 18"><rect x="1" y="1" width="5" height="8" rx="1" fill="none" stroke="#eee" /><path d="M3.500 9v7" stroke="#eee" /><path d="M6.500 4H17V13H6" fill="none" stroke="#eee" /><path d="M11.500 13v3M8 16.500h7" stroke="#eee" /></svg>
            </TrayIcon>
            <TrayIcon $ml={10}>
              <svg width="17" height="16" viewBox="0 0 17 16"><path d="M1 5h3l5-4v14l-5-4H1z" fill="#e8e8e8" /><path d="M11 5q1.500 3 0 6M13.500 3q2.500 5 0 10" fill="none" stroke="#dde" /></svg>
            </TrayIcon>
            <Lang>ENG</Lang>
            <Clock>04:44<br />10/02/2019</Clock>
          </Tray>
        </Taskbar>
      </Frame>
    </>
  );
}
